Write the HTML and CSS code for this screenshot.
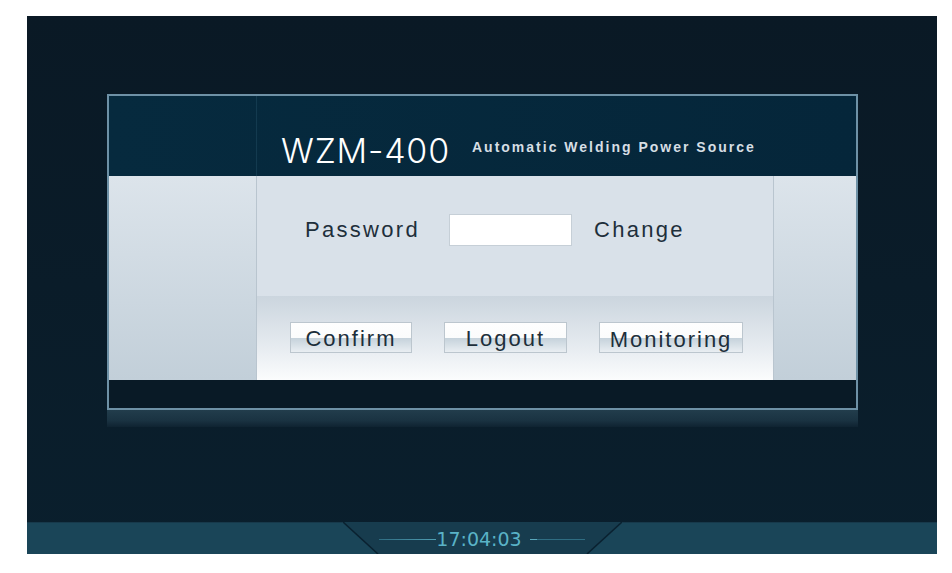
FILE: index.html
```html
<!DOCTYPE html>
<html>
<head>
<title>WZM-400</title>
<meta charset="utf-8">
<link rel="stylesheet" href="styles.css">
</head>
<body>
<div class="screen">
	<div class="stage">
		<div class="panel">
			<div class="head">
				<div class="head-side"></div>
				<div class="head-main">
					<span class="model">WZM-400</span>
					<span class="subtitle">Automatic Welding Power Source</span>
				</div>
			</div>
			<div class="body">
				<div class="side side-left"></div>
				<div class="main">
					<div class="login-row">
						<label class="label" for="pwd">Password</label>
						<input class="pwd" id="pwd" type="password">
						<span class="label change">Change</span>
					</div>
					<div class="button-row">
						<button class="btn btn-confirm">Confirm</button>
						<button class="btn btn-logout">Logout</button>
						<button class="btn btn-monitor">Monitoring</button>
					</div>
				</div>
				<div class="side side-right"></div>
			</div>
			<div class="foot"></div>
		</div>
		<div class="reflection"></div>
	</div>
	<div class="status-bar">
		<div class="clock">
			<svg class="clock-frame" width="279" height="32" viewBox="0 0 279 32">
				<polygon points="0,0 279,0 244,32 35,32" fill="#173c4e"/>
				<line x1="0" y1="0" x2="35" y2="32" stroke="#0a2130" stroke-width="1.5"/>
				<line x1="279" y1="0" x2="244" y2="32" stroke="#0a2130" stroke-width="1.5"/>
			</svg>
			<div class="clock-row">
				<span class="rule rule-left"></span>
				<span class="time">17:04:03</span>
				<span class="rule rule-right"></span>
			</div>
		</div>
	</div>
</div>
</body>
</html>
```

FILE: styles.css
```css
body {
	margin: 0;
	background: #fff;
	font-family: "Liberation Sans", Arial, sans-serif;
}
.screen {
	width: 910px;
	height: 538px;
	margin: 16px 0 0 27px;
	display: flex;
	flex-direction: column;
	background: linear-gradient(#0a1925, #0a1f2d);
}
.stage {
	flex: 1;
	padding: 78px 0 0 80px;
}
.panel {
	box-sizing: border-box;
	width: 751px;
	height: 316px;
	border: 2px solid #6e91a6;
	display: flex;
	flex-direction: column;
}
.head {
	height: 80px;
	display: flex;
	background: linear-gradient(90deg, #062a3e, #05263a);
}
.head-side {
	width: 147px;
	border-right: 1px solid #133a4f;
}
.head-main {
	flex: 1;
	display: flex;
	align-items: flex-start;
	padding: 38px 0 0 24px;
}
.model {
	font-family: Inter, sans-serif;
	font-weight: 300;
	font-size: 34px;
	line-height: 34px;
	letter-spacing: 0.8px;
	color: #fff;
}
.subtitle {
	margin: 6px 0 0 22px;
	font-size: 14px;
	line-height: 14px;
	font-weight: bold;
	letter-spacing: 2px;
	color: #d6dee4;
}
.body {
	height: 204px;
	display: flex;
}
.side {
	background: linear-gradient(#dce4eb, #c2cfd9);
}
.side-left {
	width: 147px;
	border-right: 1px solid #b9c5cf;
}
.side-right {
	width: 82px;
	border-left: 1px solid #b9c5cf;
}
.main {
	width: 516px;
	display: flex;
	flex-direction: column;
}
.login-row {
	box-sizing: border-box;
	height: 120px;
	padding: 38px 0 0 48px;
	display: flex;
	align-items: flex-start;
	background: #d9e1e9;
}
.label {
	font-size: 22px;
	line-height: 32px;
	letter-spacing: 2.3px;
	color: #1e2f3b;
}
.pwd {
	box-sizing: border-box;
	width: 123px;
	height: 32px;
	margin: 0 22px 0 29px;
	border: 1px solid #c6cfd7;
	background: #fff;
	padding: 0;
}
.button-row {
	flex: 1;
	display: flex;
	gap: 32px;
	padding: 26px 0 0 33px;
	align-items: flex-start;
	background: linear-gradient(#cbd5de, #e6ebf0 60%, #fbfcfd);
}
.btn {
	box-sizing: border-box;
	height: 31px;
	padding: 2px 0 0;
	border: 1px solid #bcc6ce;
	background: linear-gradient(#fefefe 0, #fbfcfc 50%, #c5d2db 52%, #e9eef2 100%);
	font-family: "Liberation Sans", Arial, sans-serif;
	font-size: 22px;
	line-height: 22px;
	letter-spacing: 2px;
	color: #1d2f3b;
	text-align: center;
	vertical-align: top;
}
.btn-confirm {
	width: 122px;
}
.btn-logout {
	width: 123px;
}
.btn-monitor {
	width: 144px;
	padding-top: 4px;
}
.foot {
	flex: 1;
	background: #091a26;
}
.reflection {
	width: 751px;
	height: 17px;
	background: linear-gradient(#223d4c, #1a3342 60%, #0f2331);
}
.status-bar {
	height: 32px;
	background: #1a4558;
	border-top: 1px solid #17394b;
	box-sizing: border-box;
}
.clock {
	position: relative;
	width: 279px;
	height: 31px;
	margin: 0 auto;
}
.clock-frame {
	position: absolute;
	left: 0;
	top: -1px;
}
.clock-row {
	position: relative;
	display: flex;
	justify-content: center;
	align-items: center;
	height: 31px;
	padding-top: 1px;
	box-sizing: border-box;
}
.time {
	font-family: "DejaVu Sans", sans-serif;
	font-size: 19px;
	line-height: 30px;
	color: #5ab3c7;
}
.rule {
	height: 1px;
	background: #3f8196;
}
.rule-left {
	width: 57px;
	background: linear-gradient(90deg, #2f6d82, #4f9db2);
}
.rule-right {
	width: 55px;
	margin-left: 8px;
	background: linear-gradient(90deg, #5aa9bd 0, #5aa9bd 12%, #2f6d82 13%, #2f6d82);
}
```
